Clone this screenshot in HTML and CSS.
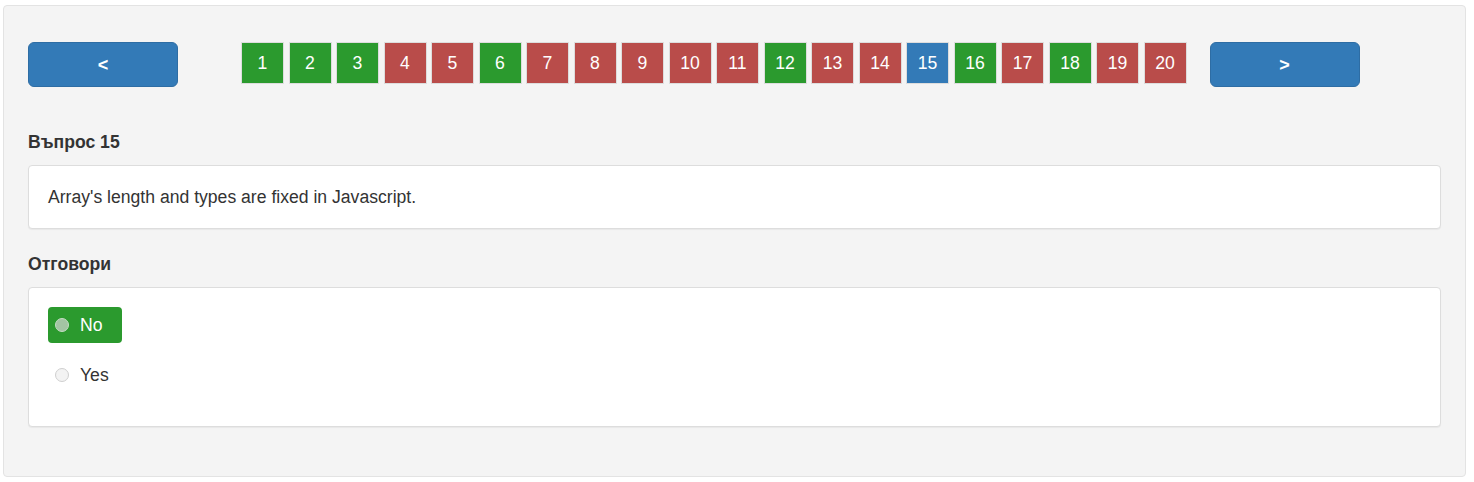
FILE: index.html
```html
<!DOCTYPE html>
<html lang="bg">
<head>
<meta charset="utf-8">
<title>Тест</title>
<link rel="stylesheet" href="styles.css">
</head>
<body>
<div class="well">
  <div class="nav-row">
    <button class="nav-btn prev">&lt;</button>
    <div class="pager">
      <span class="q ok">1</span>
      <span class="q ok">2</span>
      <span class="q ok">3</span>
      <span class="q bad">4</span>
      <span class="q bad">5</span>
      <span class="q ok">6</span>
      <span class="q bad">7</span>
      <span class="q bad">8</span>
      <span class="q bad">9</span>
      <span class="q bad">10</span>
      <span class="q bad">11</span>
      <span class="q ok">12</span>
      <span class="q bad">13</span>
      <span class="q bad">14</span>
      <span class="q cur">15</span>
      <span class="q ok">16</span>
      <span class="q bad">17</span>
      <span class="q ok">18</span>
      <span class="q bad">19</span>
      <span class="q bad">20</span>
    </div>
    <button class="nav-btn next">&gt;</button>
  </div>

  <h4 class="label first">Въпрос 15</h4>
  <div class="card">Array's length and types are fixed in Javascript.</div>

  <h4 class="label">Отговори</h4>
  <div class="card answers">
    <div class="answer selected"><span class="radio"></span><span>No</span></div>
    <div class="answer"><span class="radio"></span><span>Yes</span></div>
  </div>
</div>
</body>
</html>
```

FILE: styles.css
```css
* { box-sizing: border-box; }

html, body {
  margin: 0;
  padding: 0;
  background: #ffffff;
}

body {
  font-family: "Liberation Sans", Arial, sans-serif;
  font-size: 17.6px;
  line-height: 22px;
  color: #333333;
}

.well {
  margin: 5px 8px 0 3px;
  width: 1463px;
  height: 472px;
  background: #f4f4f4;
  border: 1px solid #e3e3e3;
  border-radius: 4px;
  padding: 36px 24px 49px 24px;
}

.nav-row {
  display: flex;
  align-items: flex-start;
  height: 45px;
}

.nav-btn {
  width: 150px;
  height: 45px;
  background: #337ab7;
  border: 1px solid #2e6da4;
  border-radius: 6px;
  color: #ffffff;
  font-family: "Liberation Sans", Arial, sans-serif;
  font-size: 18px;
  font-weight: bold;
  padding: 0;
  line-height: 40px;
}

.pager {
  display: flex;
  gap: 4.5px;
  margin-left: 63px;
  margin-right: 23px;
}

.q {
  width: 43px;
  height: 42px;
  border: 1px solid #dddddd;
  color: #ffffff;
  font-size: 17.6px;
  display: flex;
  align-items: center;
  justify-content: center;
}

.q.ok { background: #2b9a2e; }
.q.bad { background: #b94c4a; }
.q.cur { background: #337ab7; }

.label {
  margin: 44px 0 12px 0;
  font-size: 17.6px;
  font-weight: bold;
  line-height: 22px;
  color: #333333;
}

.label + .card + .label {
  margin-top: 24px;
}

.card {
  background: #ffffff;
  border: 1px solid #dddddd;
  border-radius: 4px;
  padding: 20px 19px;
  box-shadow: 0 1px 1px rgba(0, 0, 0, 0.05);
}

.answers {
  padding: 19px 19px 33px 19px;
  display: flex;
  flex-direction: column;
  align-items: flex-start;
  gap: 14px;
}

.answer {
  height: 36px;
  display: flex;
  align-items: center;
  gap: 11px;
  padding: 0 19px 0 7px;
  border-radius: 4px;
  color: #333333;
}

.answer.selected {
  background: #2b9a2e;
  color: #ffffff;
}

.radio {
  width: 14px;
  height: 14px;
  border-radius: 50%;
  border: 1px solid #cfcfcf;
  background: #f3f3f3;
}

.answer.selected .radio {
  background: #a3c4a3;
  border: 1px solid #c4dcc4;
}
```
